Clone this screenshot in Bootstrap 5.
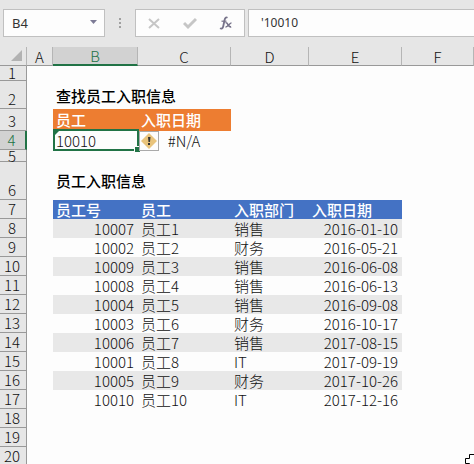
<!DOCTYPE html>
<html lang="zh-CN">
<head>
<meta charset="utf-8">
<meta name="viewport" content="width=device-width, initial-scale=1">
<title>员工入职信息</title>
<link rel="stylesheet" href="https://cdn.jsdelivr.net/npm/bootstrap@5.3.0/dist/css/bootstrap.min.css">
<style>
body { background: #fdfdfd; color: #111; font-family: "Noto Sans CJK SC", sans-serif; font-size: 15px; font-weight: 300; line-height: 18px; }
.formula-bar { background: #e6e6e6; padding: 9px 0 10px 3px; }
.bar-box { height: 28px; background: #fdfdfd; border: 1px solid #c0c0c0; }
.bar-box input { font: 13px/18px "Noto Sans", sans-serif; color: #333; outline: 0; min-width: 0; }
.name-box { width: 102px; }
.tool-box { width: 110px; margin-left: 13px; }
.formula-box { margin-left: 3px; border-right: 0; }
.formula-box input { font-size: 12px; }
.grip { width: 17px; }
.sheet { table-layout: fixed; border-collapse: separate; border-spacing: 0; }
.sheet th, .sheet td { padding: 0 4px 0 3px; vertical-align: bottom; white-space: nowrap; height: 19px; }
.sheet .col-head th { background: #e6e6e6; border-bottom: 1px solid #999; border-right: 1px solid #b5b5b5; font-weight: 300; line-height: 17px; text-align: center; padding: 0; }
.sheet .col-head th.current { background: #d2d2d2; border-bottom: 2px solid #217346; color: #217346; }
.sheet th.row-head { background: #e6e6e6; border-right: 1px solid #999; border-bottom: 1px solid #999; font-weight: 300; text-align: center; padding: 0 2px 0 0; }
.sheet th.current-row { background: #d2d2d2; border-right: 2px solid #217346; color: #217346; }
.sheet .h-short { height: 15px; line-height: 14px; }
.sheet .h-tiny { height: 12px; line-height: 11px; }
.sheet .h-title { height: 28px; }
.sheet td.h-title { line-height: 26px; }
.sheet .h-band { height: 22px; }
.sheet td.h-band { line-height: 22px; }
.sheet .h-tall { height: 38px; }
.sheet td.h-tall { padding-bottom: 10px; }
.sheet .sheet-title { font-weight: 500; color: #000; }
.sheet .orange { background: #ed7d31; color: #fff; font-weight: 500; }
.sheet .blue { background: #4472c4; color: #fff; font-weight: 500; }
.sheet .shade td { background: #e8e8e8; }
.sheet .shade td.plain { background: none; }
.selection { inset: -2px -1px -1px 0; border: 2px solid #217346; pointer-events: none; }
.selection::before { content: ""; position: absolute; left: 0; top: 0; border-top: 4px solid #217346; border-right: 4px solid transparent; }
.selection::after { content: ""; position: absolute; right: -3px; bottom: -3px; width: 6px; height: 6px; background: #217346; border: solid #fdfdfd; border-width: 1px 0 0 1px; }
.warn { left: 1px; top: 0; width: 20px; height: 20px; background: #fdfdfd; border: 1px solid #aaa; }
.pointer { right: 0; bottom: 0; }
</style>
</head>
<body class="min-vh-100 position-relative overflow-hidden">
<header class="formula-bar d-flex align-items-center">
  <div class="bar-box name-box d-flex align-items-center">
    <input class="border-0 bg-transparent p-0 ps-1 ms-1 w-75" type="text" value="B4" aria-label="名称框">
    <button class="btn p-0 border-0 d-flex ms-auto me-1" type="button" aria-label="名称列表"><svg width="11" height="8"><path d="M1 1h7L4.500 5z" fill="#7d7b96"/></svg></button>
  </div>
  <div class="grip d-flex justify-content-end"><svg width="3" height="12" fill="#a0a0a0"><path d="M0 1h2v2H0zM0 5h2v2H0zM0 9h2v2H0z"/></svg></div>
  <div class="bar-box tool-box d-flex align-items-center justify-content-around">
    <button class="btn p-0 border-0 d-flex" type="button" aria-label="取消"><svg width="14" height="14" fill="none" stroke="#c6c6c6" stroke-width="2"><path d="M2 3l10 9M12 3L2 12"/></svg></button>
    <button class="btn p-0 border-0 d-flex" type="button" aria-label="输入"><svg width="14" height="14" fill="none" stroke="#c6c6c6" stroke-width="3"><path d="M1 7l4 4 8-8"/></svg></button>
    <button class="btn p-0 border-0 d-flex" type="button" aria-label="插入函数"><svg width="14" height="14" fill="none" stroke="#77738a"><path stroke-width="1.800" d="M8.500 1.800C6.800.8 6 2 5.500 4.200L4.200 10.500C3.800 12.500 2.500 13 1 12.300"/><path stroke-width="1.200" d="M2.500 5.200h5"/><path stroke-width="1.600" d="M6.500 6.800c2.800-1 2.200 5.200 5.700 4"/><path stroke-width="1.300" d="M12.500 6.800c-2 0-3.500 4.500-6 4.200"/></svg></button>
  </div>
  <div class="bar-box formula-box flex-grow-1 d-flex align-items-center">
    <input class="border-0 bg-transparent p-0 w-100 mx-2 ps-1" type="text" value="'10010" aria-label="编辑栏">
  </div>
</header>
<table class="sheet w-100">
  <colgroup><col style="width:27px"><col style="width:26px"><col style="width:85px"><col style="width:93px"><col style="width:78px"><col style="width:93px"><col></colgroup>
  <thead>
    <tr class="col-head"><th aria-label="全选"><svg class="d-block ms-auto me-1 mb-1" width="11" height="11"><path d="M11 0v11H0z" fill="#b2b2b2"/></svg></th><th scope="col">A</th><th scope="col" class="current">B</th><th scope="col">C</th><th scope="col">D</th><th scope="col">E</th><th scope="col">F</th></tr>
  </thead>
  <tbody>
    <tr><th scope="row" class="row-head h-short">1</th><td class="h-short" colspan="6"></td></tr>
    <tr><th scope="row" class="row-head h-title">2</th><td></td><td class="sheet-title h-title" colspan="5">查找员工入职信息</td></tr>
    <tr><th scope="row" class="row-head h-band">3</th><td></td><td class="orange h-band">员工</td><td class="orange h-band">入职日期</td><td colspan="3"></td></tr>
    <tr><th scope="row" class="row-head current-row">4</th><td></td><td class="position-relative">10010<div class="selection position-absolute"></div></td><td class="position-relative text-center">#N/A<button class="btn warn p-0 rounded-0 position-absolute d-flex align-items-center justify-content-center" type="button" aria-label="错误检查选项"><svg width="16" height="16"><path d="M8 0l8 8-8 8-8-8z" fill="#e9c47c"/><path d="M7 4h2.500l-.5 5H7.500zM7 10h2v2H7z" fill="#333"/></svg></button></td><td colspan="3"></td></tr>
    <tr><th scope="row" class="row-head h-tiny">5</th><td class="h-tiny" colspan="6"></td></tr>
    <tr><th scope="row" class="row-head h-tall">6</th><td></td><td class="sheet-title h-tall" colspan="5">员工入职信息</td></tr>
    <tr><th scope="row" class="row-head">7</th><td></td><td class="blue">员工号</td><td class="blue">员工</td><td class="blue">入职部门</td><td class="blue">入职日期</td><td></td></tr>
    <tr class="shade"><th scope="row" class="row-head">8</th><td class="plain"></td><td class="text-end">10007</td><td>员工1</td><td>销售</td><td class="text-end">2016-01-10</td><td class="plain"></td></tr>
    <tr><th scope="row" class="row-head">9</th><td></td><td class="text-end">10002</td><td>员工2</td><td>财务</td><td class="text-end">2016-05-21</td><td></td></tr>
    <tr class="shade"><th scope="row" class="row-head">10</th><td class="plain"></td><td class="text-end">10009</td><td>员工3</td><td>销售</td><td class="text-end">2016-06-08</td><td class="plain"></td></tr>
    <tr><th scope="row" class="row-head">11</th><td></td><td class="text-end">10008</td><td>员工4</td><td>销售</td><td class="text-end">2016-06-13</td><td></td></tr>
    <tr class="shade"><th scope="row" class="row-head">12</th><td class="plain"></td><td class="text-end">10004</td><td>员工5</td><td>销售</td><td class="text-end">2016-09-08</td><td class="plain"></td></tr>
    <tr><th scope="row" class="row-head">13</th><td></td><td class="text-end">10003</td><td>员工6</td><td>财务</td><td class="text-end">2016-10-17</td><td></td></tr>
    <tr class="shade"><th scope="row" class="row-head">14</th><td class="plain"></td><td class="text-end">10006</td><td>员工7</td><td>销售</td><td class="text-end">2017-08-15</td><td class="plain"></td></tr>
    <tr><th scope="row" class="row-head">15</th><td></td><td class="text-end">10001</td><td>员工8</td><td>IT</td><td class="text-end">2017-09-19</td><td></td></tr>
    <tr class="shade"><th scope="row" class="row-head">16</th><td class="plain"></td><td class="text-end">10005</td><td>员工9</td><td>财务</td><td class="text-end">2017-10-26</td><td class="plain"></td></tr>
    <tr><th scope="row" class="row-head">17</th><td></td><td class="text-end">10010</td><td>员工10</td><td>IT</td><td class="text-end">2017-12-16</td><td></td></tr>
    <tr><th scope="row" class="row-head">18</th><td colspan="6"></td></tr>
    <tr><th scope="row" class="row-head">19</th><td colspan="6"></td></tr>
    <tr><th scope="row" class="row-head">20</th><td colspan="6"></td></tr>
  </tbody>
</table>
<svg class="pointer position-absolute" width="9" height="12" aria-hidden="true"><path d="M9 .5H4.500v4h-4v5h4v3" fill="#fff" stroke="#000"/></svg>
<script src="https://cdn.jsdelivr.net/npm/bootstrap@5.3.0/dist/js/bootstrap.bundle.min.js"></script>
</body>
</html>
